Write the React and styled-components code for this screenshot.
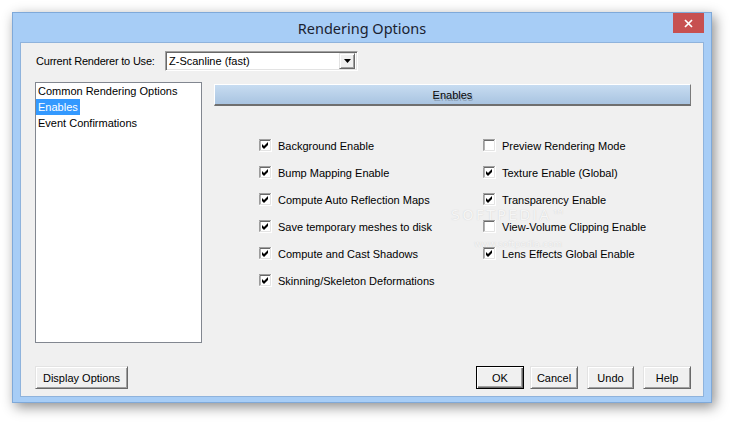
import React from "react";
import styled, { createGlobalStyle } from "styled-components";

const Global = createGlobalStyle`
  html, body { margin: 0; padding: 0; background: #ffffff; }
  body { font-family: "Liberation Sans", Arial, sans-serif; }
`;

const Page = styled.div`
  width: 732px;
  height: 425px;
  padding: 12px 0 0 12px;
  box-sizing: border-box;
`;

const Window = styled.div`
  width: 700px;
  height: 391px;
  box-sizing: border-box;
  background: #a7cdf6;
  border: 1px solid #7fa9d9;
  box-shadow: 3px 4px 12px rgba(0, 0, 0, 0.45);
  display: flex;
  flex-direction: column;
  padding: 0 7px 5px 7px;
  position: relative;
`;

const TitleBar = styled.div`
  height: 29px;
  display: flex;
  align-items: center;
  justify-content: center;
  position: relative;
  font-family: "Noto Sans", "Open Sans", sans-serif;
  font-size: 14.5px;
  color: #1a2230;
  padding-top: 1px;
  box-sizing: border-box;
`;

const CloseButton = styled.div`
  position: absolute;
  top: 0;
  right: 0;
  width: 31px;
  height: 20px;
  background: #c75050;
  display: flex;
  align-items: center;
  justify-content: center;
`;

const Content = styled.div`
  flex: 1;
  background: #f0f0f0;
  border: 1px solid #8fb3dc;
  display: flex;
  flex-direction: column;
  padding: 8px 12px 7px 14px;
  font-size: 11px;
  color: #000;
  position: relative;
`;

const TopRow = styled.div`
  display: flex;
  align-items: center;
  height: 20px;
`;

const Label = styled.span`
  margin-left: 1px;
  width: 129px;
  letter-spacing: -0.2px;
`;

const Select = styled.div`
  width: 193px;
  height: 20px;
  box-sizing: border-box;
  background: #fff;
  border-top: 1px solid #a0a0a0;
  border-left: 1px solid #a0a0a0;
  border-right: 1px solid #ffffff;
  border-bottom: 1px solid #ffffff;
  box-shadow: inset 1px 1px 0 #696969, inset -1px -1px 0 #e3e3e3;
  display: flex;
  align-items: center;
  padding: 0 2px 0 3px;
`;

const SelectText = styled.span`
  flex: 1;
`;

const ArrowButton = styled.div`
  width: 16px;
  height: 16px;
  box-sizing: border-box;
  background: #f0f0f0;
  border-top: 1px solid #e3e3e3;
  border-left: 1px solid #e3e3e3;
  border-right: 1px solid #696969;
  border-bottom: 1px solid #696969;
  box-shadow: inset 1px 1px 0 #fff, inset -1px -1px 0 #a0a0a0;
  display: flex;
  align-items: center;
  justify-content: center;
`;

const Middle = styled.div`
  display: flex;
  gap: 12px;
  margin-top: 11px;
`;

const ListBox = styled.div`
  width: 167px;
  height: 261px;
  box-sizing: border-box;
  background: #fff;
  border: 1px solid #828790;
  padding: 0;
  display: flex;
  flex-direction: column;
`;

const ListItem = styled.div`
  height: 16px;
  line-height: 16px;
  padding: 0 2px;
  align-self: flex-start;
  background: ${(p) => (p.$selected ? "#3399ff" : "transparent")};
  color: ${(p) => (p.$selected ? "#fff" : "#000")};
`;

const RightPane = styled.div`
  flex: 1;
  padding-top: 2px;
  display: flex;
  flex-direction: column;
`;

const HeaderBar = styled.div`
  height: 22px;
  box-sizing: border-box;
  background: linear-gradient(#c7dcf1, #a9c4e1);
  border-top: 1px solid #ffffff;
  border-left: 1px solid #ffffff;
  border-right: 1px solid #7a7a7a;
  border-bottom: 2px solid #6f6f6f;
  display: flex;
  align-items: center;
  justify-content: center;
  position: relative;
`;

const HeaderText = styled.span`
  position: relative;
  color: #000;
  &::after {
    content: "${(p) => p.$ghost}";
    position: absolute;
    left: 1px;
    top: 2px;
    color: rgba(80, 92, 108, 0.4);
  }
`;

const Options = styled.div`
  display: grid;
  grid-template-columns: 224px 1fr;
  margin-top: 26px;
  margin-left: 45px;
`;

const Column = styled.div`
  display: flex;
  flex-direction: column;
`;

const OptionRow = styled.label`
  display: flex;
  align-items: center;
  height: 27px;
  gap: 6px;
`;

const Bottom = styled.div`
  display: flex;
  align-items: center;
  margin-top: auto;
`;

const Button = styled.div`
  width: ${(p) => p.$w || 48}px;
  height: 23px;
  box-sizing: border-box;
  margin-left: ${(p) => p.$ml || 0}px;
  background: #f0f0f0;
  border-top: 1px solid ${(p) => (p.$default ? "#000" : "#e3e3e3")};
  border-left: 1px solid ${(p) => (p.$default ? "#000" : "#e3e3e3")};
  border-right: 1px solid ${(p) => (p.$default ? "#000" : "#696969")};
  border-bottom: 1px solid ${(p) => (p.$default ? "#000" : "#696969")};
  box-shadow: ${(p) =>
    p.$default
      ? "inset 1px 1px 0 #fff, inset -1px -1px 0 #696969, inset -2px -2px 0 #a0a0a0"
      : "inset 1px 1px 0 #fff, inset -1px -1px 0 #a0a0a0"};
  display: flex;
  align-items: center;
  justify-content: center;
`;

const Spacer = styled.div`
  flex: 1;
`;

const Watermark = styled.div`
  position: absolute;
  left: ${(p) => p.$x}px;
  top: ${(p) => p.$y}px;
  font-family: "DejaVu Sans", sans-serif;
  font-size: ${(p) => p.$size}px;
  line-height: 1;
  letter-spacing: ${(p) => p.$ls || 0}px;
  color: #f6f6f6;
  text-shadow: 0 0 1px rgba(150, 150, 150, 0.4);
  pointer-events: none;
`;

const Check = ({ checked }) => (
  <svg width="13" height="13" viewBox="0 0 13 13" style={{ flex: "none" }}>
    <rect x="0" y="0" width="13" height="13" fill="#fff" />
    <path d="M0 12.5 V0.5 H12.5" fill="none" stroke="#a0a0a0" />
    <path d="M1 11.5 V1.5 H11.5" fill="none" stroke="#696969" />
    <path d="M0.5 13 V12.5 H12.5 V0" fill="none" stroke="#fff" />
    <path d="M1.5 12 V11.5 H11.5 V1" fill="none" stroke="#e3e3e3" />
    {checked && <path d="M3 5 L5 7 L9 3 L9 6 L5 10 L3 8 Z" fill="#000" />}
  </svg>
);

const left = [
  "Background Enable",
  "Bump Mapping Enable",
  "Compute Auto Reflection Maps",
  "Save temporary meshes to disk",
  "Compute and Cast Shadows",
  "Skinning/Skeleton Deformations",
];
const right = [
  ["Preview Rendering Mode", false],
  ["Texture Enable (Global)", true],
  ["Transparency Enable", true],
  ["View-Volume Clipping Enable", false],
  ["Lens Effects Global Enable", true],
];

export default function App() {
  return (
    <Page>
      <Global />
      <Window>
        <TitleBar>
          Rendering Options
          <CloseButton>
            <svg width="9" height="9" viewBox="0 0 9 9">
              <path d="M1 1 L8 8 M8 1 L1 8" stroke="#fff" strokeWidth="1.7" />
            </svg>
          </CloseButton>
        </TitleBar>
        <Content>
          <TopRow>
            <Label>Current Renderer to Use:</Label>
            <Select>
              <SelectText>Z-Scanline (fast)</SelectText>
              <ArrowButton>
                <svg width="7" height="4" viewBox="0 0 7 4">
                  <path d="M0 0 H7 L3.5 4 Z" fill="#000" />
                </svg>
              </ArrowButton>
            </Select>
          </TopRow>
          <Middle>
            <ListBox>
              <ListItem>Common Rendering Options</ListItem>
              <ListItem $selected>Enables</ListItem>
              <ListItem>Event Confirmations</ListItem>
            </ListBox>
            <RightPane>
              <HeaderBar>
                <HeaderText $ghost="Enables">Enables</HeaderText>
              </HeaderBar>
              <Options>
                <Column>
                  {left.map((t) => (
                    <OptionRow key={t}>
                      <Check checked />
                      {t}
                    </OptionRow>
                  ))}
                </Column>
                <Column>
                  {right.map(([t, c]) => (
                    <OptionRow key={t}>
                      <Check checked={c} />
                      {t}
                    </OptionRow>
                  ))}
                </Column>
              </Options>
            </RightPane>
          </Middle>
          <Bottom>
            <Button $w={93}>Display Options</Button>
            <Spacer />
            <Button $default>OK</Button>
            <Button $ml={6}>Cancel</Button>
            <Button $ml={9} $w={47}>Undo</Button>
            <Button $ml={9}>Help</Button>
          </Bottom>
          <Watermark $x={430} $y={165} $size={14} $ls={2.5}>
            SOFTPEDIA™
          </Watermark>
          <Watermark $x={453} $y={197} $size={9}>
            www.softpedia.com
          </Watermark>
        </Content>
      </Window>
    </Page>
  );
}
